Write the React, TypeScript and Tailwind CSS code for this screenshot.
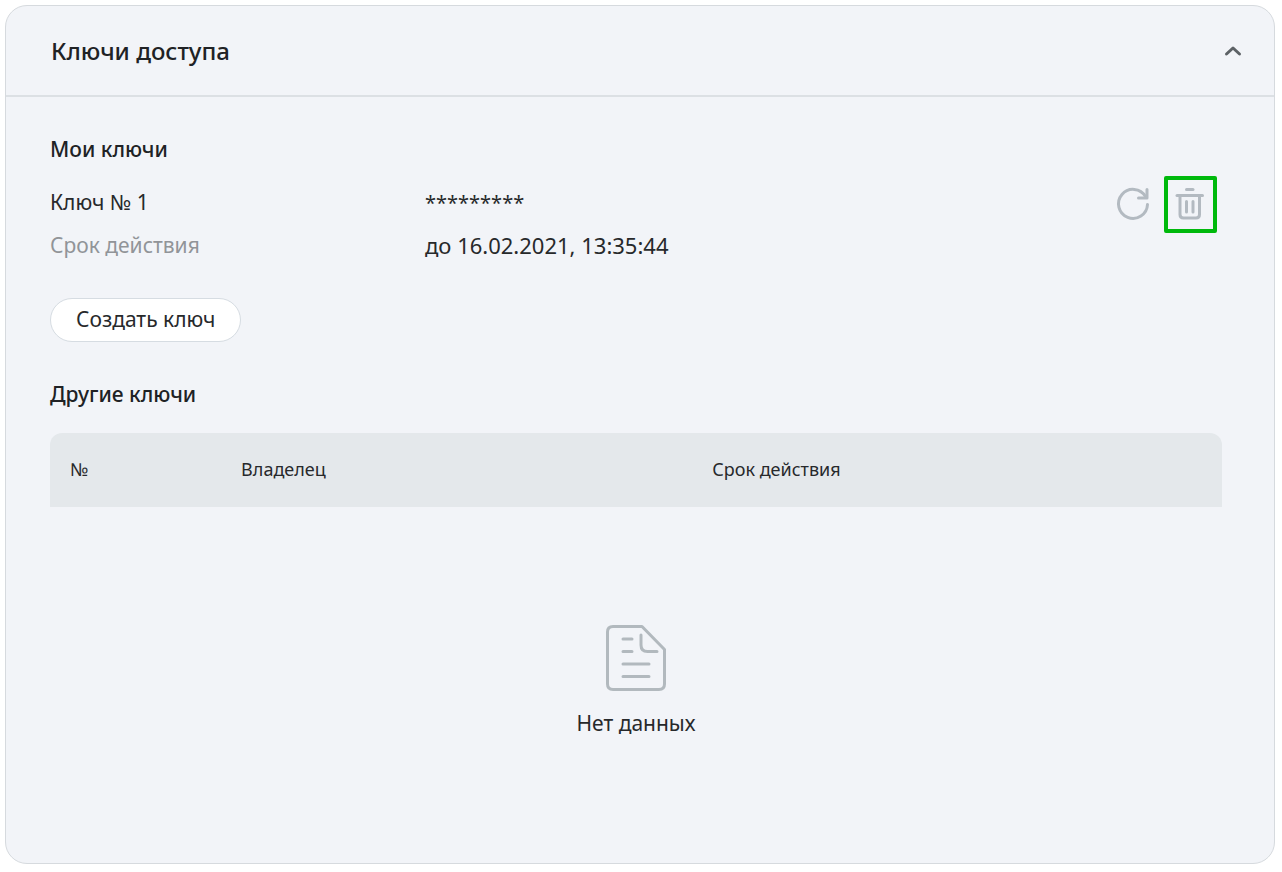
import React from 'react';

function RefreshIcon() {
  return (
    <svg viewBox="0 1 36 36" className="size-9" fill="none" stroke="#b3bac1" strokeWidth="3" strokeLinecap="round" strokeLinejoin="round" aria-hidden="true">
      <path d="M32.500 18.500A14.500 14.500 0 1 1 30.500 10.500" />
      <path d="M32 3.500V12H23.500" />
    </svg>
  );
}

function TrashIcon() {
  return (
    <svg viewBox="1 1 36 36" className="size-9" fill="none" stroke="#b3bac1" strokeWidth="3" strokeLinecap="round" strokeLinejoin="round" aria-hidden="true">
      <path d="M14.500 3.500H21" />
      <path d="M5 9.500H30.500" />
      <path d="M8 9.500V28.500Q8 32 11.500 32H24Q27.500 32 27.500 28.500V9.500" />
      <path d="M14.500 15.500V26M21 15.500V26" />
    </svg>
  );
}

function DocumentIcon() {
  return (
    <svg viewBox="0 0 64 70" className="h-[70px] w-16" fill="none" stroke="#b2b9be" strokeWidth="3" strokeLinecap="round" strokeLinejoin="round" aria-hidden="true">
      <path d="M9 3.500H38L60.500 26.500V61Q60.500 66.500 55 66.500H9Q3.500 66.500 3.500 61V9Q3.500 3.500 9 3.500Z" />
      <path d="M37 12V22Q37 28.500 43.500 28.500H53" />
      <path d="M19 16H28M19 28.500H28M19 41H45M19 53.500H45" />
    </svg>
  );
}

export default function App() {
  return (
    <main className="bg-white pt-[5px] pr-[7px] pb-2 pl-[5px] font-['Noto_Sans','Open_Sans',sans-serif] text-[#27292b]">
      <section className="rounded-[22px] border border-[#d6dade] bg-[#f2f4f8] pb-[124px]">
        <header className="flex items-center justify-between border-b-2 border-[#dce0e4] pt-[29px] pr-[25px] pb-7 pl-[45px]">
          <h1 className="text-2xl leading-8 font-medium text-[#202225]">Ключи доступа</h1>
          <button type="button" aria-label="Свернуть" className="flex size-8 items-center justify-center">
            <svg viewBox="0 0 20 14" className="h-3.5 w-5" fill="none" stroke="#5d6266" strokeWidth="3" strokeLinecap="round" strokeLinejoin="round" aria-hidden="true">
              <path d="M3.500 10L10 4L16.500 10" />
            </svg>
          </button>
        </header>

        <div className="pt-9 pr-[52px] pl-11">
          <h2 className="text-[21px] leading-8 font-medium text-[#202225]">Мои ключи</h2>
          <div className="mt-4 flex items-start justify-between">
            <dl className="grid grid-cols-[375px_auto] text-[21px] leading-[43px]">
              <dt>Ключ № 1</dt>
              <dd className="text-xl leading-[43px]">*********</dd>
              <dt className="text-[#919498]">Срок действия</dt>
              <dd className="text-[22px]">до 16.02.2021, 13:35:44</dd>
            </dl>
            <div className="-mt-[5px] mr-[5px] flex items-center gap-[13px]">
              <button type="button" aria-label="Обновить ключ"><RefreshIcon /></button>
              <button type="button" aria-label="Удалить ключ" className="flex h-[57px] w-[53px] items-center justify-center rounded-[2px] border-4 border-[#00b90c]"><TrashIcon /></button>
            </div>
          </div>
          <button type="button" className="mt-[31px] h-11 rounded-full border border-[#d6dce2] bg-white px-[25px] text-[21px]">Создать ключ</button>

          <h2 className="mt-9 text-[21px] leading-8 font-medium text-[#202225]">Другие ключи</h2>
          <table className="mt-[23px] w-full table-fixed border-separate border-spacing-0 text-left">
            <thead className="text-lg leading-7">
              <tr className="h-[74px]">
                <th scope="col" className="w-[14.6%] rounded-tl-xl bg-[#e4e8eb] pb-0.5 pl-5 font-normal">№</th>
                <th scope="col" className="w-[40.2%] bg-[#e4e8eb] pb-0.5 pl-5 font-normal">Владелец</th>
                <th scope="col" className="rounded-tr-xl bg-[#e4e8eb] pb-0.5 pl-5 font-normal">Срок действия</th>
              </tr>
            </thead>
            <tbody>
              <tr>
                <td colSpan={3} className="pt-[116px] text-[21px] leading-8">
                  <div className="flex flex-col items-center gap-3.5">
                    <DocumentIcon />
                    <span>Нет данных</span>
                  </div>
                </td>
              </tr>
            </tbody>
          </table>
        </div>
      </section>
    </main>
  );
}
